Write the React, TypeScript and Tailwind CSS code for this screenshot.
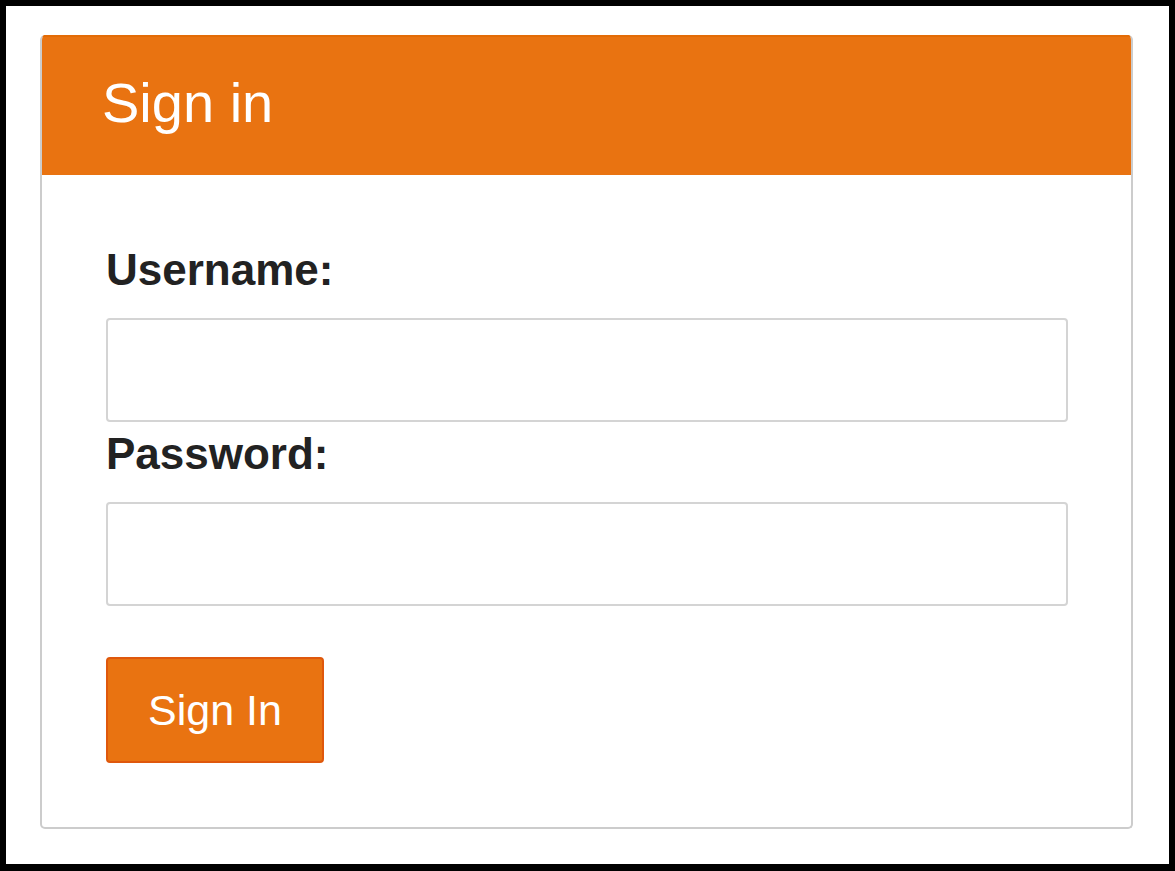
export default function App() {
  return (
    <div className="h-[871px] w-[1175px] bg-black pt-[6px] pl-[6px] pr-[6px] pb-[7px] font-['Liberation_Sans',Arial,sans-serif]">
      <div className="h-full w-full bg-white pl-[34px] pt-[29px] pr-[36px]">
        <div className="flex h-[794px] w-[1093px] flex-col overflow-hidden rounded-[5px] border-2 border-[#cccccc] border-t-0">
          <div className="h-[140px] shrink-0 border-t-2 border-[#e36b06] bg-[#e97311] pl-[60px] pt-[38px]">
            <h1 className="text-[56px] leading-none text-white">Sign in</h1>
          </div>
          <form className="flex flex-col px-[64px] pt-[73px]">
            <label className="text-[44px] font-bold leading-none text-[#222]">
              Username:
            </label>
            <input
              type="text"
              className="mt-[26px] h-[104px] w-[962px] rounded-[4px] border-2 border-[#d4d4d4] bg-white"
            />
            <label className="mt-[10px] text-[44px] font-bold leading-none text-[#222]">
              Password:
            </label>
            <input
              type="password"
              className="mt-[26px] h-[104px] w-[962px] rounded-[4px] border-2 border-[#d4d4d4] bg-white"
            />
            <div className="mt-[51px]">
              <button
                type="button"
                className="h-[106px] w-[218px] rounded-[4px] border-2 border-[#df580c] bg-[#e97311] text-[43px] leading-none text-white"
              >
                Sign In
              </button>
            </div>
          </form>
        </div>
      </div>
    </div>
  );
}
